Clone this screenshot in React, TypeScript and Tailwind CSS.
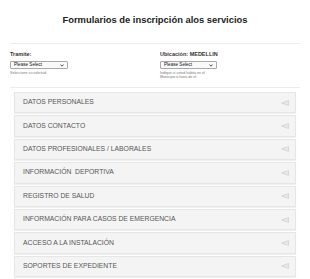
import React from 'react';

const sections = [
  'DATOS PERSONALES',
  'DATOS CONTACTO',
  'DATOS PROFESIONALES / LABORALES',
  'INFORMACIÓN  DEPORTIVA',
  'REGISTRO DE SALUD',
  'INFORMACIÓN PARA CASOS DE EMERGENCIA',
  'ACCESO A LA INSTALACIÓN',
  'SOPORTES DE EXPEDIENTE',
];

const FakeSelect: React.FC<{ width: string }> = ({ width }) => (
  <div
    className={`${width} h-[8px] border border-[#a9a9a9] rounded-[1px] bg-[#fafafa] flex items-center justify-between pl-[3px] pr-[3px]`}
  >
    <span className="text-[4.6px] leading-none text-[#111]">Please Select</span>
    <svg width="4" height="3" viewBox="0 0 4 3" aria-hidden="true">
      <path d="M0.4 0.5 L2 2.2 L3.6 0.5" fill="none" stroke="#222" strokeWidth="0.8" />
    </svg>
  </div>
);

const SectionRow: React.FC<{ title: string }> = ({ title }) => (
  <div className="h-[21.4px] bg-[#f4f4f4] border border-[#e6e6e6] shadow-[0_1px_1px_rgba(0,0,0,0.06)] flex items-center justify-between pl-[8px] pr-[6px]">
    <span className="text-[6.8px] leading-none text-[#555] whitespace-pre">{title}</span>
    <svg width="8" height="6" viewBox="0 0 8 6" aria-hidden="true">
      <polygon points="7.5,0.5 7.5,5.5 0.5,3" fill="#e8e8e8" stroke="#cfcfcf" strokeWidth="0.7" />
    </svg>
  </div>
);

export default function App() {
  return (
    <div className="w-[310px] h-[279px] bg-white px-[10px] overflow-hidden font-['Liberation_Sans',Arial,sans-serif]">
      <h1 className="pt-[14px] h-[43px] text-center font-bold text-[9.4px] leading-[12px] text-[#222]">
        Formularios de inscripción alos servicios
      </h1>

      <div className="border-t border-[#ececec] h-[44px] grid grid-cols-[150px_1fr] pt-[7px]">
        <div>
          <div className="text-[5.5px] leading-[7px] font-bold text-[#333]">Tramite:</div>
          <div className="mt-[3px]">
            <FakeSelect width="w-[58px]" />
          </div>
          <div className="mt-[1.5px] text-[3.6px] leading-[4.5px] text-[#777]">Seleccione su solicitud</div>
        </div>
        <div>
          <div className="text-[5.5px] leading-[7px] font-bold text-[#333]">Ubicación: MEDELLIN</div>
          <div className="mt-[3px]">
            <FakeSelect width="w-[57px]" />
          </div>
          <div className="mt-[1.5px] text-[3.6px] leading-[4.3px] text-[#777]">
            Indique si usted habita en el
            <br />
            Municipio o fuera de el.
          </div>
        </div>
      </div>

      <div className="border-t border-[#ececec] pt-[4px] px-[4px] flex flex-col gap-[2px]">
        {sections.map((s) => (
          <SectionRow key={s} title={s} />
        ))}
      </div>
    </div>
  );
}
